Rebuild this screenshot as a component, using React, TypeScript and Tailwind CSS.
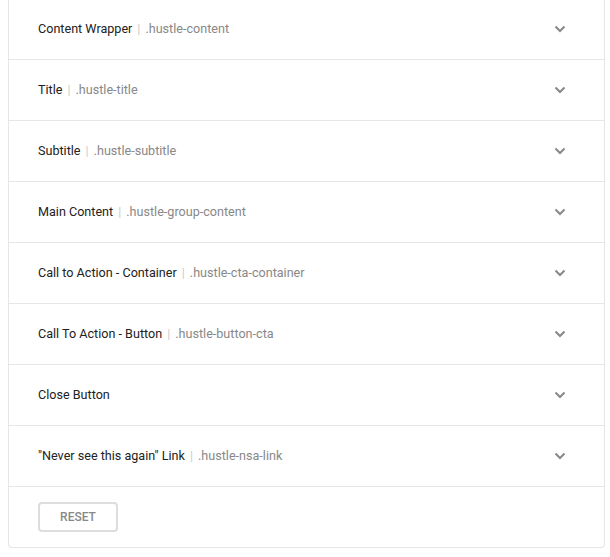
import { useState } from 'react';

const rows: { label: string; cls?: string }[] = [
  { label: 'Content Wrapper', cls: '.hustle-content' },
  { label: 'Title', cls: '.hustle-title' },
  { label: 'Subtitle', cls: '.hustle-subtitle' },
  { label: 'Main Content', cls: '.hustle-group-content' },
  { label: 'Call to Action - Container', cls: '.hustle-cta-container' },
  { label: 'Call To Action - Button', cls: '.hustle-button-cta' },
  { label: 'Close Button' },
  { label: '"Never see this again" Link', cls: '.hustle-nsa-link' },
];

function Chevron() {
  return (
    <svg width="12" height="8" viewBox="0 0 12 8" className="text-[#888]">
      <path d="M1.5 1.5 L6 6 L10.5 1.5" fill="none" stroke="currentColor" strokeWidth="2" />
    </svg>
  );
}

export default function App() {
  const [open, setOpen] = useState<number | null>(null);

  return (
    <div className="min-h-[557px] bg-white font-['Roboto',sans-serif] pl-[8px] pr-[5px]">
      <div className="-mt-px border-x border-b border-[#e6e6e6] rounded-b-[4px]">
        {rows.map((row, i) => (
          <button
            key={row.label}
            type="button"
            onClick={() => setOpen(open === i ? null : i)}
            className="w-full h-[61px] flex items-center justify-between border-b border-[#e6e6e6] pl-[29px] pr-[38px] text-left"
          >
            <span className="text-[12.6px] leading-none">
              <span className="text-[#222]">{row.label}</span>
              {row.cls && (
                <>
                  <span className="mx-[5px] text-[#ccc]">|</span>
                  <span className="text-[#888]">{row.cls}</span>
                </>
              )}
            </span>
            <Chevron />
          </button>
        ))}
        <div className="h-[60px] pl-[29px] pt-[15px]">
          <button
            type="button"
            className="h-[30px] w-[80px] border-2 border-[#ddd] rounded-[4px] text-[12px] font-medium text-[#888] uppercase"
          >
            Reset
          </button>
        </div>
      </div>
    </div>
  );
}
